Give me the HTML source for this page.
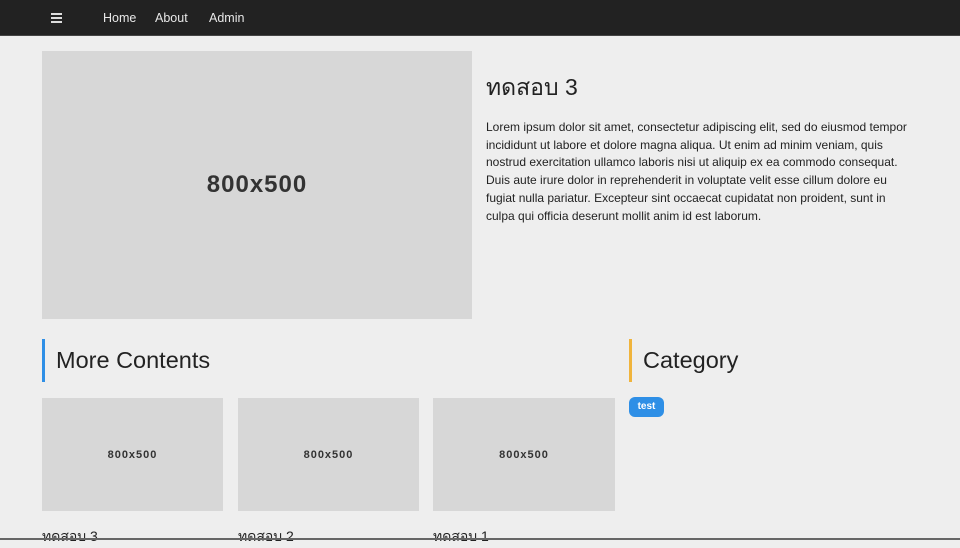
<!DOCTYPE html>
<html><head><meta charset="utf-8"><style>
*{margin:0;padding:0;box-sizing:border-box}
body{width:960px;height:540px;overflow:hidden;background:#eeeeee;font-family:"Liberation Sans","DejaVu Sans",sans-serif;color:#222;position:relative}
.nav{height:36px;background:#222;border-bottom:1px solid #444;position:relative}
.nav span{position:absolute;top:11px;color:#e8e8e8;font-size:12.5px}
.ham{position:absolute;left:51px;top:13px;width:11px}
.ham i{display:block;height:2px;background:#ddd;margin-bottom:2px}
.ph{position:absolute;background:#d7d7d7;display:flex;align-items:center;justify-content:center;font-weight:bold;color:#333;letter-spacing:1px}
h1{position:absolute;left:486px;top:70px;font-size:23px;font-weight:normal}
p{position:absolute;left:486px;top:119px;font-size:12px;line-height:17.7px;color:#222;white-space:nowrap}
.h2{position:absolute;font-size:23.5px;padding-left:11px;height:43px;line-height:43px}
.tag{position:absolute;left:629px;top:397px;width:35px;height:20px;border-radius:6px;background:#2e8fe6;color:#fff;font-size:10px;font-weight:bold;text-align:center;line-height:20px}
.t{position:absolute;top:526px;font-size:14px}
.bot{position:absolute;left:0;top:538px;width:960px;height:2px;background:#666}
</style></head><body>
<div class="nav"><div class="ham"><i></i><i></i><i></i></div>
<span style="left:103px">Home</span><span style="left:155px">About</span><span style="left:209px">Admin</span></div>
<div class="ph" style="left:42px;top:51px;width:430px;height:268px;font-size:24px">800x500</div>
<h1>ทดสอบ 3</h1>
<p>Lorem ipsum dolor sit amet, consectetur adipiscing elit, sed do eiusmod tempor<br>incididunt ut labore et dolore magna aliqua. Ut enim ad minim veniam, quis<br>nostrud exercitation ullamco laboris nisi ut aliquip ex ea commodo consequat.<br>Duis aute irure dolor in reprehenderit in voluptate velit esse cillum dolore eu<br>fugiat nulla pariatur. Excepteur sint occaecat cupidatat non proident, sunt in<br>culpa qui officia deserunt mollit anim id est laborum.</p>
<div class="h2" style="left:42px;top:339px;border-left:3px solid #2e8fe6">More Contents</div>
<div class="h2" style="left:629px;top:339px;border-left:3px solid #f0b43c">Category</div>
<div class="ph" style="left:42px;top:398px;width:181px;height:113px;font-size:11px">800x500</div>
<div class="ph" style="left:238px;top:398px;width:181px;height:113px;font-size:11px">800x500</div>
<div class="ph" style="left:433px;top:398px;width:182px;height:113px;font-size:11px">800x500</div>
<div class="tag">test</div>
<div class="t" style="left:42px">ทดสอบ 3</div>
<div class="t" style="left:238px">ทดสอบ 2</div>
<div class="t" style="left:433px">ทดสอบ 1</div>
<div class="bot"></div>
</body></html>
